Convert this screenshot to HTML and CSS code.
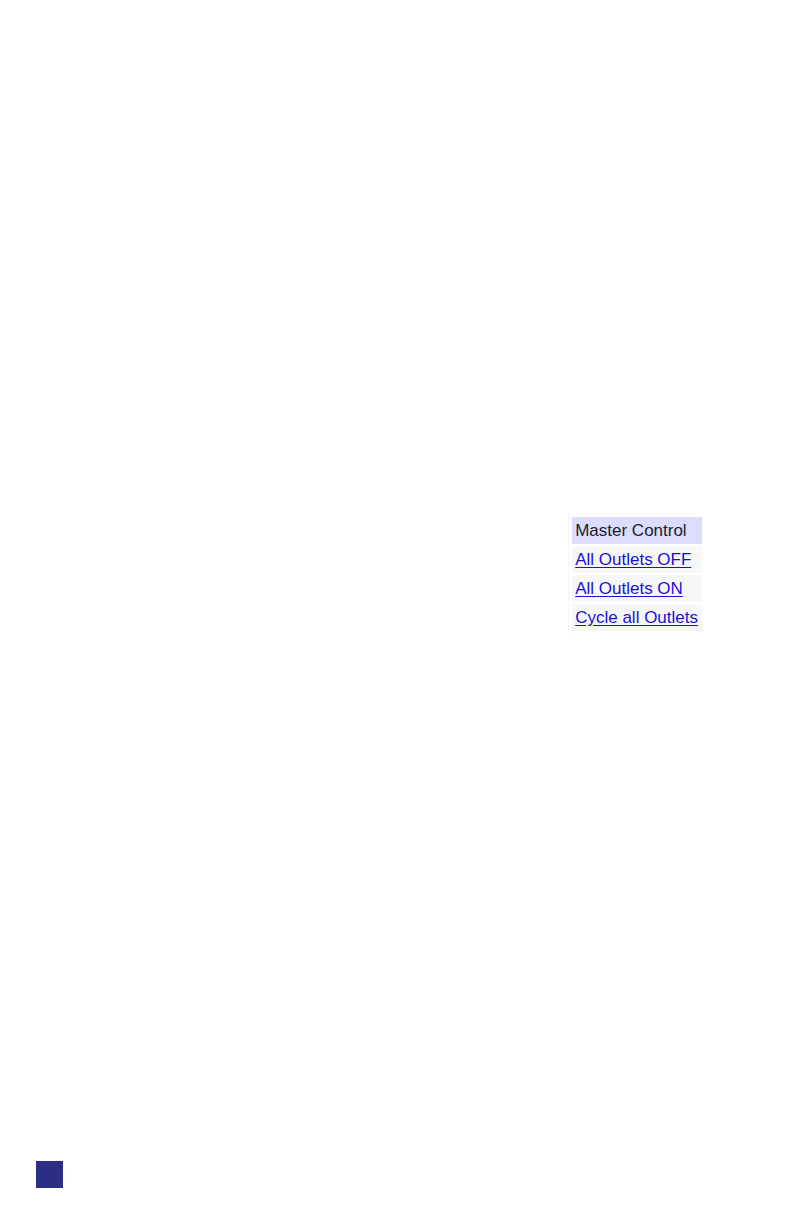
FILE: index.html
```html
<!DOCTYPE html>
<html lang="en">
<head>
    <meta charset="UTF-8">
    <title>Master Control</title>
    <link rel="stylesheet" href="styles.css">
</head>
<body>
    <main>
        <div class="panel">
            <table class="menu">
                <thead>
                    <tr><th>Master Control</th></tr>
                </thead>
                <tbody>
                    <tr><td><a href="#off">All Outlets OFF</a></td></tr>
                    <tr><td><a href="#on">All Outlets ON</a></td></tr>
                    <tr><td><a href="#cycle">Cycle all Outlets</a></td></tr>
                </tbody>
            </table>
        </div>
    </main>
    <footer>
        <div class="marker"></div>
    </footer>
</body>
</html>
```

FILE: styles.css
```css
* {
    box-sizing: border-box;
}
body {
    margin: 0;
    min-height: 100vh;
    display: flex;
    flex-direction: column;
    background-color: white;
    font-family: "Liberation Sans", Arial, sans-serif;
    font-size: 17px;
}
main {
    flex: 1;
    display: flex;
    justify-content: flex-end;
    align-items: flex-start;
    padding: 513px 88px 0 0;
}
.panel {
    padding-left: 1px;
    border-left: 1px solid #f4f4f8;
}
.menu {
    border-collapse: separate;
    border-spacing: 2px;
    padding: 2px 0;
}
.menu th,
.menu td {
    height: 27px;
    padding: 0 4px 0 3px;
    line-height: 27px;
    font-weight: normal;
    text-align: left;
    white-space: nowrap;
}
.menu th {
    background-color: #dcdcfc;
    color: #1c1c2c;
}
.menu td {
    background-color: #f6f7f9;
}
.menu a {
    color: #1c10d8;
    text-underline-offset: 2px;
}
footer {
    padding: 0 36px 36px;
}
.marker {
    width: 27px;
    height: 27px;
    background-color: #2b2e83;
}
```
